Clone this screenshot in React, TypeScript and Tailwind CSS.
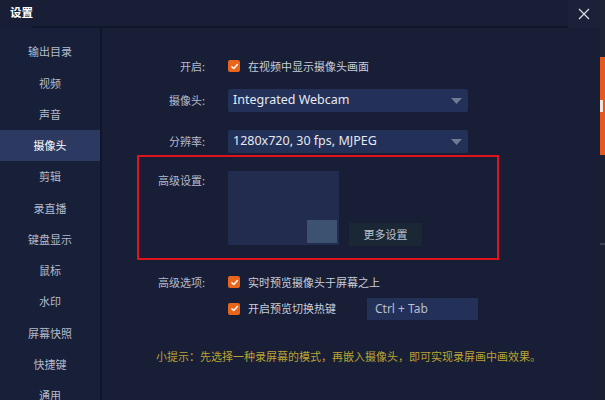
import React from "react";

const font = { fontFamily: '"Noto Sans CJK SC", "Noto Sans", sans-serif' };

function Check() {
  return (
    <div className="w-[12px] h-[12px] rounded-[2px] bg-[#e8651c] flex items-center justify-center shrink-0">
      <svg width="9" height="9" viewBox="0 0 10 10">
        <path d="M2 5.2 L4.2 7.3 L8.2 2.8" stroke="#fff" strokeWidth="1.6" fill="none" strokeLinecap="round" strokeLinejoin="round" />
      </svg>
    </div>
  );
}

function Select({ value }: { value: string }) {
  return (
    <div className="w-[240px] h-[23px] bg-[#233058] rounded-[2px] flex items-center justify-between pl-[5px] pr-[6px]">
      <span className="text-[12.5px] text-[#e6e9f0]" style={{ fontFamily: '"Noto Sans", sans-serif' }}>{value}</span>
      <svg width="11" height="6" viewBox="0 0 11 6">
        <path d="M0 0 L11 0 L5.5 6 Z" fill="#6f7a95" />
      </svg>
    </div>
  );
}

const items = ["输出目录", "视频", "声音", "摄像头", "剪辑", "录直播", "键盘显示", "鼠标", "水印", "屏幕快照", "快捷键", "通用"];

export default function App() {
  return (
    <div className="w-[605px] h-[400px] overflow-hidden flex bg-[#171e36] text-[11px] text-[#b4bacb]" style={font}>
      <div className="w-[600px] h-full flex flex-col">
        <div className="h-[28px] flex shrink-0">
          <div className="w-[32px] pl-[10px] pt-[4px] text-[11.5px] text-white font-bold whitespace-nowrap">设置</div>
          <div className="flex-1 border-b-2 border-[#10162a]"></div>
          <div className="w-[32px] flex items-center justify-center bg-[#1a2139]">
            <svg width="12" height="12" viewBox="0 0 12 12">
              <path d="M1 1 L11 11 M11 1 L1 11" stroke="#d8dce6" strokeWidth="1.3" />
            </svg>
          </div>
        </div>
        <div className="flex flex-1 min-h-0">
          <div className="w-[102px] border-r-2 border-[#10162a] bg-[#172038] pt-[8px] flex flex-col shrink-0">
            {items.map((t) => (
              <div
                key={t}
                className={
                  "h-[31.25px] shrink-0 flex items-center justify-center " +
                  (t === "摄像头" ? "bg-[#2c3a62] text-white" : "text-[#b4bacb]")
                }
              >
                {t}
              </div>
            ))}
          </div>
          <div className="flex-1 pl-[35px] flex flex-col">
            <div className="flex items-center h-[14px] mt-[31px]">
              <div className="w-[70px] text-right pr-[2px]">开启:</div>
              <div className="ml-[21px] flex items-center gap-[8px]">
                <Check />
                <span className="text-[#c8cdd9]">在视频中显示摄像头画面</span>
              </div>
            </div>
            <div className="flex items-center mt-[16px]">
              <div className="w-[70px] text-right pr-[2px]">摄像头:</div>
              <div className="ml-[21px]"><Select value="Integrated Webcam" /></div>
            </div>
            <div className="flex items-center mt-[18px]">
              <div className="w-[70px] text-right pr-[2px]">分辨率:</div>
              <div className="ml-[21px]"><Select value="1280x720, 30 fps, MJPEG" /></div>
            </div>
            <div className="mt-[2px] w-[362px] h-[105px] border-2 border-[#e0121c] flex">
              <div className="w-[68px] text-right pr-[2px] pt-[15px]">高级设置:</div>
              <div className="ml-[21px] mt-[14px] w-[111px] h-[74px] bg-[#222c4f] flex items-end justify-end p-[2px]">
                <div className="w-[30px] h-[23px] bg-[#3d5270]"></div>
              </div>
              <div className="ml-[10px] mt-[66px] w-[73px] h-[23px] bg-[#1a2836] flex items-center justify-center text-[#b9c0cc]">
                更多设置
              </div>
            </div>
            <div className="flex items-center mt-[14px]">
              <div className="w-[70px] text-right pr-[2px]">高级选项:</div>
              <div className="ml-[21px] flex items-center gap-[8px]">
                <Check />
                <span className="text-[#c8cdd9]">实时预览摄像头于屏幕之上</span>
              </div>
            </div>
            <div className="flex items-center mt-[7px]">
              <div className="w-[70px]"></div>
              <div className="ml-[21px] flex items-center gap-[8px]">
                <Check />
                <span className="text-[#c8cdd9] w-[119px]">开启预览切换热键</span>
              </div>
              <div className="w-[111px] h-[22px] bg-[#233058] flex items-center pl-[8px] text-[12px] text-[#b8bfcc]" style={{ fontFamily: '"Noto Sans", sans-serif' }}>
                Ctrl + Tab
              </div>
            </div>
            <div className="mt-[28px] pl-[19px] text-[#bba332] whitespace-nowrap">
              小提示：先选择一种录屏幕的模式，再嵌入摄像头，即可实现录屏画中画效果。
            </div>
          </div>
        </div>
      </div>
      <div className="w-[5px] h-full flex flex-col bg-[#1b2132]">
        <div className="h-[57px] bg-[#1d2436]"></div>
        <div className="h-[98px] bg-[#e8571b] flex items-center">
          <div className="w-[3px] h-[12px] bg-[#f4e2d6]"></div>
        </div>
        <div className="h-[88px]"></div>
        <div className="h-[2px] bg-[#3a4258]"></div>
      </div>
    </div>
  );
}
